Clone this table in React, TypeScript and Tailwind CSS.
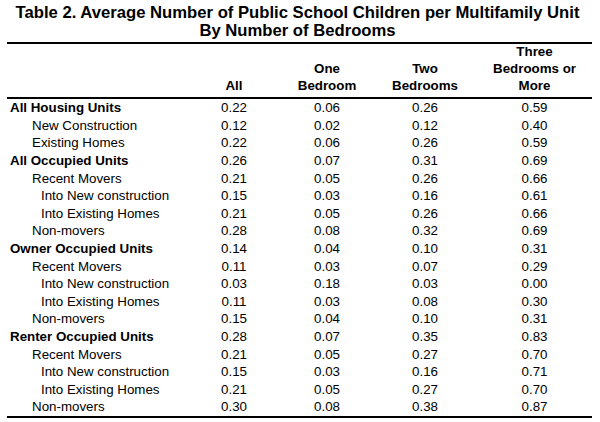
import React from "react";

type Row = { label: string; level: 0 | 1 | 2; v: [string, string, string, string] };

const rows: Row[] = [
  { label: "All Housing Units", level: 0, v: ["0.22", "0.06", "0.26", "0.59"] },
  { label: "New Construction", level: 1, v: ["0.12", "0.02", "0.12", "0.40"] },
  { label: "Existing Homes", level: 1, v: ["0.22", "0.06", "0.26", "0.59"] },
  { label: "All Occupied Units", level: 0, v: ["0.26", "0.07", "0.31", "0.69"] },
  { label: "Recent Movers", level: 1, v: ["0.21", "0.05", "0.26", "0.66"] },
  { label: "Into New construction", level: 2, v: ["0.15", "0.03", "0.16", "0.61"] },
  { label: "Into Existing Homes", level: 2, v: ["0.21", "0.05", "0.26", "0.66"] },
  { label: "Non-movers", level: 1, v: ["0.28", "0.08", "0.32", "0.69"] },
  { label: "Owner Occupied Units", level: 0, v: ["0.14", "0.04", "0.10", "0.31"] },
  { label: "Recent Movers", level: 1, v: ["0.11", "0.03", "0.07", "0.29"] },
  { label: "Into New construction", level: 2, v: ["0.03", "0.18", "0.03", "0.00"] },
  { label: "Into Existing Homes", level: 2, v: ["0.11", "0.03", "0.08", "0.30"] },
  { label: "Non-movers", level: 1, v: ["0.15", "0.04", "0.10", "0.31"] },
  { label: "Renter Occupied Units", level: 0, v: ["0.28", "0.07", "0.35", "0.83"] },
  { label: "Recent Movers", level: 1, v: ["0.21", "0.05", "0.27", "0.70"] },
  { label: "Into New construction", level: 2, v: ["0.15", "0.03", "0.16", "0.71"] },
  { label: "Into Existing Homes", level: 2, v: ["0.21", "0.05", "0.27", "0.70"] },
  { label: "Non-movers", level: 1, v: ["0.30", "0.08", "0.38", "0.87"] },
];

const labelClass = (level: 0 | 1 | 2) =>
  level === 0 ? "pl-[3px] font-bold" : level === 1 ? "pl-[25px]" : "pl-[34px]";

export default function App() {
  return (
    <div
      className="w-[600px] h-[422px] bg-white text-black pt-[3.5px] px-[7px] overflow-hidden"
      style={{ fontFamily: '"Liberation Sans", Arial, sans-serif' }}
    >
      <div className="text-center font-bold text-[16.67px] leading-[18.3px] pr-[5px]">
        <div>Table 2. Average Number of Public School Children per Multifamily Unit</div>
        <div>By Number of Bedrooms</div>
      </div>
      <div className="mt-[2px] w-[585px] border-t-2 border-b-2 border-black">
        <table className="table-fixed w-[585px] border-collapse text-[13.33px]">
          <colgroup>
            <col className="w-[180px]" />
            <col className="w-[94px]" />
            <col className="w-[92px]" />
            <col className="w-[104px]" />
            <col className="w-[115px]" />
          </colgroup>
          <thead>
            <tr className="border-b-2 border-black font-bold leading-[16.7px] align-bottom">
              <th className="h-[53px] pb-[3px]"></th>
              <th className="pb-[3px] text-center font-bold">All</th>
              <th className="pb-[3px] text-center font-bold">
                One
                <br />
                Bedroom
              </th>
              <th className="pb-[3px] text-center font-bold">
                Two
                <br />
                Bedrooms
              </th>
              <th className="pb-[3px] text-center font-bold">
                Three
                <br />
                Bedrooms or
                <br />
                More
              </th>
            </tr>
          </thead>
          <tbody>
            {rows.map((r, i) => (
              <tr key={i} className="h-[17.6px] leading-[17.6px]">
                <td className={`p-0 text-left whitespace-nowrap ${labelClass(r.level)}`}>{r.label}</td>
                {r.v.map((x, j) => (
                  <td key={j} className="p-0 text-center">
                    {x}
                  </td>
                ))}
              </tr>
            ))}
          </tbody>
        </table>
      </div>
    </div>
  );
}
